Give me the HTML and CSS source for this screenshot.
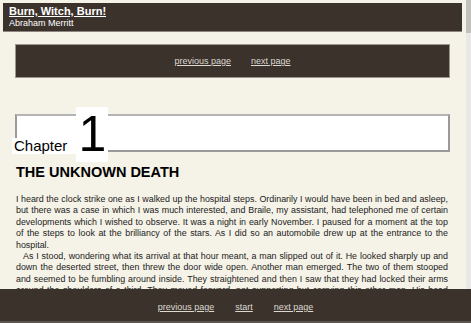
FILE: index.html
```html
<!DOCTYPE html>
<html lang="en">
<head>
    <meta charset="UTF-8">
    <meta name="viewport" content="width=device-width, initial-scale=1.0">
    <title>Burn, Witch, Burn! - Chapter 1</title>
    <link rel="stylesheet" href="styles.css">
</head>
<body>
    <div class="frame">
        <div class="page">
            <header class="book-head">
                <a href="#" class="book-title">Burn, Witch, Burn!</a>
                <div class="book-author">Abraham Merritt</div>
            </header>

            <nav class="pager">
                <a href="#">previous page</a>
                <a href="#">next page</a>
            </nav>

            <div class="chapter">
                <div class="chapter-label">
                    <span class="chapter-word">Chapter</span>
                    <span class="chapter-num">1</span>
                </div>
            </div>

            <h3 class="chapter-title">THE UNKNOWN DEATH</h3>

            <div class="text">
                <p>I heard the clock strike one as I walked up the hospital steps. Ordinarily I would have been in bed and asleep, but there was a case in which I was much interested, and Braile, my assistant, had telephoned me of certain developments which I wished to observe. It was a night in early November. I paused for a moment at the top of the steps to look at the brilliancy of the stars. As I did so an automobile drew up at the entrance to the hospital.</p>
                <p>As I stood, wondering what its arrival at that hour meant, a man slipped out of it. He looked sharply up and down the deserted street, then threw the door wide open. Another man emerged. The two of them stooped and seemed to be fumbling around inside. They straightened and then I saw that they had locked their arms around the shoulders of a third. They moved forward, not supporting but carrying this other man. His head hung down upon his breast and his body was limp between them as they came up the steps.</p>
            </div>
        </div>
        <div class="scrollbar"><div class="thumb"></div></div>
    </div>

    <footer class="bottom-nav">
        <a href="#">previous page</a>
        <a href="#">start</a>
        <a href="#">next page</a>
    </footer>
</body>
</html>
```

FILE: styles.css
```css
body {
    margin: 0;
    padding: 0;
    background-color: #f5f2e7;
    font-family: "Liberation Sans", Arial, sans-serif;
    color: #222;
}
a {
    color: #dcd8d0;
}
.frame {
    display: flex;
    height: 100vh;
    overflow: hidden;
}
.page {
    flex: 1;
    padding: 3px 3px 0 3px;
}
.scrollbar {
    width: 5px;
    margin-left: 1px;
    background-color: #e9e8e6;
}
.thumb {
    height: 33px;
    background-color: #c3c1bd;
}

/* top bar with the book name */
.book-head {
    background-color: #3b322c;
    border-bottom: 1px solid #8d8680;
    padding: 2px 6px 3px 6px;
}
.book-title {
    display: block;
    width: max-content;
    color: #fff;
    font-size: 11px;
    font-weight: bold;
    line-height: 13px;
}
.book-author {
    color: #fff;
    font-size: 9px;
    line-height: 10px;
}

/* page links */
.pager {
    margin: 12px 12px 0 12px;
    height: 32px;
    background-color: #3b322c;
    border: 1px solid #9c968d;
    display: flex;
    justify-content: center;
    align-items: center;
    gap: 20px;
    font-size: 9px;
}

/* chapter box */
.chapter {
    position: relative;
    margin: 36px 12px 0 12px;
    height: 34px;
    background-color: #fff;
    border: 2px solid #9a9a9a;
    border-top-color: #b4b4b4;
}
.chapter-label {
    position: absolute;
    left: -5px;
    bottom: -12px;
    display: flex;
    align-items: baseline;
    color: #000;
}
.chapter-word {
    background-color: #fff;
    font-size: 15px;
    line-height: 16px;
    padding: 0 9px 0 2px;
}
.chapter-num {
    background-color: #fff;
    font-size: 50px;
    line-height: 55px;
    padding: 0 2px;
}

.chapter-title {
    margin: 12px 0 0 0;
    padding-left: 13px;
    font-size: 14.5px;
    line-height: 17px;
    color: #000;
}

.text {
    margin: 13px 14px 0 13px;
    font-size: 8.9px;
    line-height: 11.4px;
    text-align: justify;
}
.text p {
    margin: 0;
}
.text p + p {
    text-indent: 7px;
}

/* fixed bar at the bottom */
.bottom-nav {
    position: fixed;
    left: 0;
    right: 0;
    bottom: 0;
    height: 28px;
    padding-top: 4px;
    background-color: #3b322c;
    border-bottom: 2px solid #5c554f;
    display: flex;
    justify-content: center;
    align-items: center;
    gap: 21px;
    font-size: 9px;
}
```
